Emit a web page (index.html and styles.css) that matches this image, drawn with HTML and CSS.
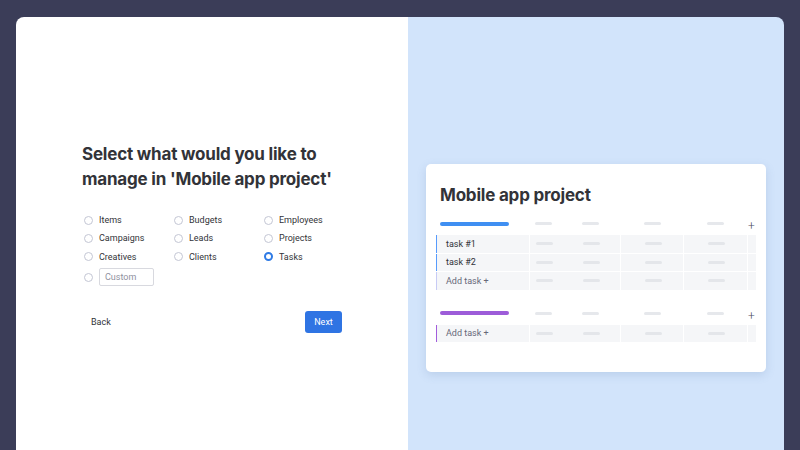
FILE: index.html
```html
<!DOCTYPE html>
<html>
<head>
<meta charset="utf-8">
<link rel="stylesheet" href="styles.css">
</head>
<body>
<div class="window">
  <section class="left">
    <div class="form">
      <h1 class="title">Select what would you like to<br>manage in 'Mobile app project'</h1>
      <div class="options">
        <label class="opt"><span class="radio"></span>Items</label>
        <label class="opt"><span class="radio"></span>Budgets</label>
        <label class="opt"><span class="radio"></span>Employees</label>
        <label class="opt"><span class="radio"></span>Campaigns</label>
        <label class="opt"><span class="radio"></span>Leads</label>
        <label class="opt"><span class="radio"></span>Projects</label>
        <label class="opt"><span class="radio"></span>Creatives</label>
        <label class="opt"><span class="radio"></span>Clients</label>
        <label class="opt"><span class="radio checked"></span>Tasks</label>
        <label class="opt custom"><span class="radio"></span><span class="input">Custom</span></label>
      </div>
      <div class="actions">
        <span class="back">Back</span>
        <span class="next">Next</span>
      </div>
    </div>
  </section>
  <section class="right">
    <div class="card">
      <h2 class="card-title">Mobile app project</h2>
      <div class="group blue">
        <div class="ghead">
          <div class="c0"><span class="bar"></span></div>
          <div class="c1"><span class="dash"></span><span class="dash"></span></div>
          <div class="c2"><span class="dash"></span></div>
          <div class="c3"><span class="dash"></span></div>
          <div class="c4"><span class="plus">+</span></div>
        </div>
        <div class="row item">
          <div class="c0 name">task #1</div>
          <div class="c1 cell"><span class="dash"></span><span class="dash"></span></div>
          <div class="c2 cell"><span class="dash"></span></div>
          <div class="c3 cell"><span class="dash"></span></div>
          <div class="c4 cell"></div>
        </div>
        <div class="row item">
          <div class="c0 name">task #2</div>
          <div class="c1 cell"><span class="dash"></span><span class="dash"></span></div>
          <div class="c2 cell"><span class="dash"></span></div>
          <div class="c3 cell"><span class="dash"></span></div>
          <div class="c4 cell"></div>
        </div>
        <div class="row add">
          <div class="c0 name">Add task +</div>
          <div class="c1 cell"><span class="dash"></span><span class="dash"></span></div>
          <div class="c2 cell"><span class="dash"></span></div>
          <div class="c3 cell"><span class="dash"></span></div>
          <div class="c4 cell"></div>
        </div>
      </div>
      <div class="group purple">
        <div class="ghead">
          <div class="c0"><span class="bar"></span></div>
          <div class="c1"><span class="dash"></span><span class="dash"></span></div>
          <div class="c2"><span class="dash"></span></div>
          <div class="c3"><span class="dash"></span></div>
          <div class="c4"><span class="plus">+</span></div>
        </div>
        <div class="row add">
          <div class="c0 name">Add task +</div>
          <div class="c1 cell"><span class="dash"></span><span class="dash"></span></div>
          <div class="c2 cell"><span class="dash"></span></div>
          <div class="c3 cell"><span class="dash"></span></div>
          <div class="c4 cell"></div>
        </div>
      </div>
    </div>
  </section>
</div>
</body>
</html>
```

FILE: styles.css
```css
* { box-sizing: border-box; }
html, body { margin: 0; padding: 0; }
body {
  background: #3b3d58;
  width: 800px;
  height: 450px;
  overflow: hidden;
  font-family: Roboto, "Liberation Sans", sans-serif;
  color: #323338;
}
.window {
  margin: 17px 16px 0;
  height: 433px;
  display: flex;
  border-radius: 8px 8px 0 0;
  overflow: hidden;
}
.left {
  flex: none;
  width: 392px;
  background: #ffffff;
  padding: 125px 0 0 66px;
}
.form { width: 260px; }
.title {
  margin: 0;
  font-family: Inter, "Noto Sans", sans-serif;
  font-weight: 700;
  font-size: 17px;
  line-height: 25px;
  letter-spacing: -0.2px;
  color: #323338;
}
.options {
  margin-top: 19px;
  display: grid;
  grid-template-columns: 90px 90px 80px;
  grid-auto-rows: 18.3px;
  margin-left: 2px;
}
.opt {
  display: flex;
  align-items: center;
  gap: 6px;
  font-size: 9px;
  color: #323338;
}
.opt.custom { height: 21px; margin-top: 1px; }
.radio {
  width: 9px;
  height: 9px;
  border-radius: 50%;
  border: 1px solid #c3c6d4;
  background: #fff;
  flex: none;
}
.radio.checked {
  border: 2.5px solid #2f7be5;
  background: #fff;
}
.input {
  width: 55px;
  height: 18px;
  border: 1px solid #d8d9df;
  border-radius: 2px;
  padding-left: 5px;
  display: flex;
  align-items: center;
  color: #8f91a0;
  font-size: 9px;
}
.actions {
  margin-top: 27px;
  display: flex;
  justify-content: space-between;
  align-items: center;
}
.back {
  font-size: 9px;
  padding-left: 9px;
  color: #323338;
}
.next {
  width: 37px;
  height: 22px;
  background: #2f74e3;
  border-radius: 3px;
  color: #fff;
  font-size: 9px;
  display: flex;
  align-items: center;
  justify-content: center;
}
.right {
  flex: 1;
  background: #d2e4fb;
  padding: 147px 18px 0;
}
.card {
  background: #fff;
  border-radius: 5px;
  box-shadow: 0 3px 10px rgba(80, 110, 160, 0.18);
  height: 208px;
  padding: 13px 9px 0 10px;
}
.card-title {
  margin: 0 0 0 4px;
  font-family: Inter, "Noto Sans", sans-serif;
  font-weight: 700;
  font-size: 17px;
  line-height: 36px;
  letter-spacing: -0.2px;
  color: #323338;
}
.group { margin-top: 2px; }
.group + .group { margin-top: 15px; }
.ghead, .row {
  display: grid;
  grid-template-columns: 92px 90px 62px 63px 8px;
  column-gap: 1px;
}
.ghead {
  height: 16px;
  align-items: center;
}
.ghead > div { display: flex; align-items: center; }
.ghead .c0 { padding-left: 4px; }
.bar {
  width: 69px;
  height: 4px;
  border-radius: 2px;
}
.blue .bar { background: #3f8ff2; }
.purple .bar { background: #9d5cd9; }
.c1 { padding-left: 6px; gap: 30px; }
.c2, .c3 { padding-left: 24px; }
.c1, .c2, .c3, .c4 { display: flex; align-items: center; }
.dash {
  width: 17px;
  height: 3px;
  border-radius: 2px;
  background: #e6e8ec;
}
.plus {
  font-size: 12px;
  font-weight: 300;
  color: #4b4d60;
  line-height: 1;
  margin-top: 5px;
  margin-left: 1px;
}
.row {
  height: 17.5px;
  margin-top: 1px;
  border-left: 1px solid #579bfc;
}
.ghead + .row { margin-top: 4px; }
.row.add { border-left-color: #c7cbf5; }
.purple .row { border-left-color: #a25ddc; }
.row > div { background: #f5f6f8; height: 100%; }
.name {
  display: flex;
  align-items: center;
  padding-left: 9px;
  font-size: 9px;
  color: #323338;
}
.add .name { color: #676879; }
.cell .dash { background: #e4e6ea; }
```
